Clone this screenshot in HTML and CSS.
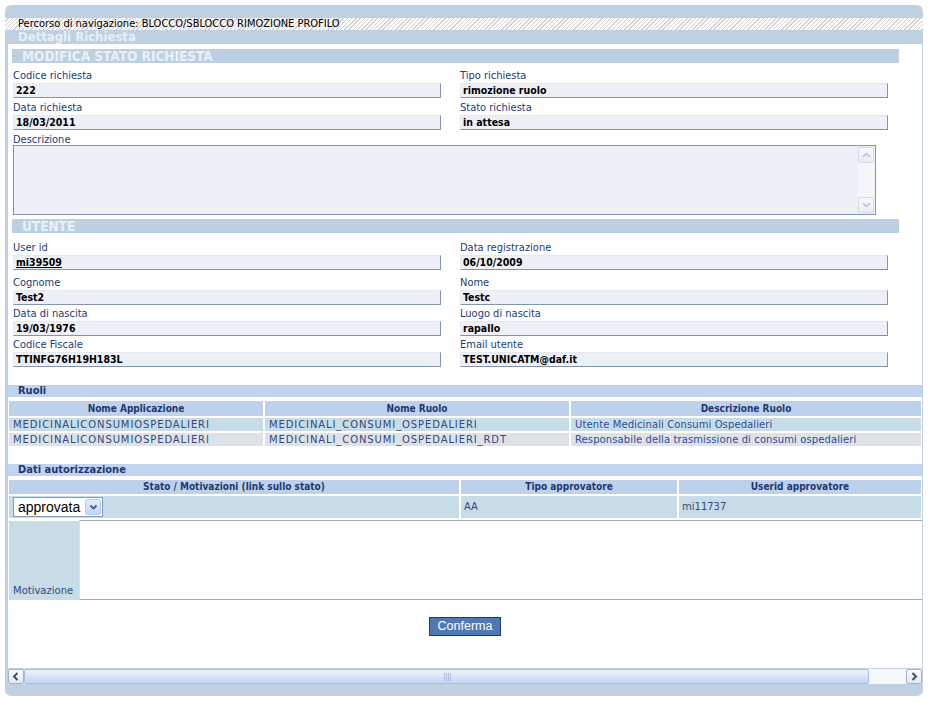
FILE: index.html
```html
<!DOCTYPE html>
<html lang="it">
<head>
<meta charset="utf-8">
<title>Dettagli Richiesta</title>
<link rel="stylesheet" href="styles.css">
</head>
<body>
<div class="panel">
  <div class="nav">Percorso di navigazione: BLOCCO/SBLOCCO RIMOZIONE PROFILO</div>
  <div class="title">Dettagli Richiesta</div>
  <div class="content">
    <div class="form">
      <div class="band">MODIFICA STATO RICHIESTA</div>
      <div class="grid g1">
        <div class="field"><label>Codice richiesta</label><div class="input">222</div></div>
        <div class="field"><label>Tipo richiesta</label><div class="input">rimozione ruolo</div></div>
        <div class="field"><label>Data richiesta</label><div class="input">18/03/2011</div></div>
        <div class="field"><label>Stato richiesta</label><div class="input">in attesa</div></div>
      </div>
      <div class="field desc">
        <label>Descrizione</label>
        <div class="textarea">
          <div class="vscroll">
            <span class="vbtn"><svg width="9" height="6" viewBox="0 0 9 6"><path d="M1 5 L4.5 1.5 L8 5" stroke="#b7c5da" stroke-width="1.6" fill="none"/></svg></span>
            <span class="vtrack"></span>
            <span class="vbtn"><svg width="9" height="6" viewBox="0 0 9 6"><path d="M1 1 L4.5 4.5 L8 1" stroke="#b7c5da" stroke-width="1.6" fill="none"/></svg></span>
          </div>
        </div>
      </div>
      <div class="band u">UTENTE</div>
      <div class="grid g2">
        <div class="field top"><label>User id</label><div class="input"><a class="lnk">mi39509</a></div></div>
        <div class="field top"><label>Data registrazione</label><div class="input">06/10/2009</div></div>
        <div class="field"><label>Cognome</label><div class="input">Test2</div></div>
        <div class="field"><label>Nome</label><div class="input">Testc</div></div>
        <div class="field"><label>Data di nascita</label><div class="input">19/03/1976</div></div>
        <div class="field"><label>Luogo di nascita</label><div class="input">rapallo</div></div>
        <div class="field"><label>Codice Fiscale</label><div class="input">TTINFG76H19H183L</div></div>
        <div class="field"><label>Email utente</label><div class="input">TEST.UNICATM@daf.it</div></div>
      </div>
    </div>

    <div class="bar">Ruoli</div>
    <table class="data ruoli">
      <colgroup><col class="c1"><col class="c2"><col class="c3"></colgroup>
      <tr><th>Nome Applicazione</th><th>Nome Ruolo</th><th>Descrizione Ruolo</th></tr>
      <tr class="r1"><td class="up">MEDICINALICONSUMIOSPEDALIERI</td><td class="up">MEDICINALI_CONSUMI_OSPEDALIERI</td><td class="desc-c">Utente Medicinali Consumi Ospedalieri</td></tr>
      <tr class="r2"><td class="up">MEDICINALICONSUMIOSPEDALIERI</td><td class="up">MEDICINALI_CONSUMI_OSPEDALIERI_RDT</td><td class="desc-c">Responsabile della trasmissione di consumi ospedalieri</td></tr>
    </table>

    <div class="bar b2">Dati autorizzazione</div>
    <table class="data auth">
      <colgroup><col class="a1"><col class="a2"><col class="a3"></colgroup>
      <tr><th>Stato / Motivazioni (link sullo stato)</th><th>Tipo approvatore</th><th>Userid approvatore</th></tr>
      <tr class="r1 sel-row">
        <td>
          <div class="select"><span class="sel-text">approvata</span><span class="sel-btn"><svg width="9" height="7" viewBox="0 0 9 7"><path d="M1.5 1.5 L4.5 4.5 L7.5 1.5" stroke="#4d6185" stroke-width="2" fill="none"/></svg></span></div>
        </td>
        <td>AA</td>
        <td>mi11737</td>
      </tr>
    </table>
    <div class="motiv">
      <div class="mlabel">Motivazione</div>
      <div class="mtext"></div>
    </div>

    <div class="actions"><button class="btn" type="button">Conferma</button></div>

    <div class="hscroll">
      <span class="hbtn"><svg width="8" height="9" viewBox="0 0 8 9"><path d="M5.5 1 L2 4.5 L5.5 8" stroke="#3f4f72" stroke-width="2" fill="none"/></svg></span>
      <span class="thumb"><svg width="8" height="8" viewBox="0 0 8 8"><path d="M1.5 0 V8 M3.5 0 V8 M5.5 0 V8 M7.5 0 V8" stroke="#a9bde0" stroke-width="1"/></svg></span>
      <span class="htrack"></span>
      <span class="hbtn"><svg width="8" height="9" viewBox="0 0 8 9"><path d="M2.5 1 L6 4.5 L2.5 8" stroke="#3f4f72" stroke-width="2" fill="none"/></svg></span>
    </div>
  </div>
</div>
</body>
</html>
```
FILE: styles.css
```css
* { box-sizing: border-box; }
html, body { margin: 0; background: #fff; }
body {
  font-family: "DejaVu Sans Condensed", "DejaVu Sans", sans-serif;
  font-size: 11px;
  color: #000;
}

.panel {
  width: 918px;
  margin: 5px 0 0 5px;
  background: #bed0e2;
  border-radius: 6px;
  padding: 13px 0 12px;
}

.nav {
  height: 12px;
  line-height: 12px;
  padding-left: 13px;
  font-size: 11px;
  color: #000;
  background: repeating-linear-gradient(135deg, #fbfbfb 0 2px, #d3d3d3 2px 3px);
  white-space: nowrap;
}

.title {
  height: 14px;
  line-height: 14px;
  padding-left: 13px;
  font-weight: bold;
  font-size: 13px;
  color: #e9eff7;
}

.content {
  background: #fff;
  margin: 0 1px 0 3px;
}

.form { padding: 5px 0 0 5px; }

.band {
  height: 14px;
  line-height: 14px;
  margin-left: -1px;
  width: 887px;
  background: #bdd0e3;
  color: #eaf0f7;
  font-weight: bold;
  font-size: 13.5px;
  padding-left: 10px;
}
.band.u { margin-top: 4px; }

.grid {
  display: grid;
  grid-template-columns: 428px 428px;
  column-gap: 19px;
  row-gap: 4px;
  margin-top: 7px;
}
.g2 { margin-top: 9px; row-gap: 3px; }
.g2 .top { margin-bottom: 4px; }

.field label {
  display: block;
  height: 12px;
  line-height: 12px;
  color: #213b78;
  font-size: 11px;
  white-space: nowrap;
}

.input {
  height: 15px;
  margin-top: 1px;
  background: #eef0f7;
  border-style: solid;
  border-width: 1px;
  border-color: #e4e8ef #8395ab #8395ab #e8ebf2;
  font-weight: bold;
  font-size: 10.5px;
  line-height: 13px;
  padding-left: 2px;
  white-space: nowrap;
}
.lnk { color: #000; text-decoration: underline; }

.desc { margin-top: 4px; }
.desc label { height: 11px; line-height: 11px; }

.textarea {
  width: 863px;
  height: 70px;
  border: 1px solid #7f93aa;
  background: #eef0f7;
  display: flex;
  justify-content: flex-end;
  padding: 1px;
}
.vscroll {
  width: 16px;
  display: flex;
  flex-direction: column;
  background: #f5f6f9;
}
.vbtn {
  height: 16px;
  display: flex;
  align-items: center;
  justify-content: center;
  background: linear-gradient(#f6f8fc, #e7edf7);
  border: 1px solid #d3dced;
  border-radius: 2px;
}
.vtrack { flex: 1; }

.bar {
  height: 12px;
  line-height: 12px;
  background: #c1d3ee;
  color: #1f3770;
  font-weight: bold;
  font-size: 11px;
  padding-left: 10px;
  margin-top: 18px;
}
.bar.b2 { margin-top: 16px; }

table.data {
  border-collapse: separate;
  border-spacing: 2px;
  width: 916px;
  margin: 2px 0 0 -1px;
  table-layout: fixed;
}
col.c1 { width: 254px; }
col.c2 { width: 304px; }
col.c3 { width: 350px; }
col.a1 { width: 450px; }
col.a2 { width: 216px; }
col.a3 { width: 242px; }

th {
  height: 15px;
  line-height: 15px;
  padding: 0;
  background: #bed1ea;
  color: #1f3770;
  font-weight: bold;
  font-size: 10px;
  text-align: center;
  white-space: nowrap;
}
.auth th { height: 14px; line-height: 14px; }

td {
  height: 13px;
  line-height: 13px;
  padding: 0 0 0 4px;
  font-family: "DejaVu Sans", sans-serif;
  font-size: 10px;
  color: #34477f;
  white-space: nowrap;
  overflow: hidden;
}
td.up { letter-spacing: 0.9px; }
td.desc-c { color: #2f4c9c; letter-spacing: 0.1px; }
tr.r1 td { background: #c7dce6; }
tr.r2 td { background: #dde2e6; }

.sel-row td { height: 22px; line-height: 22px; vertical-align: middle; padding-left: 3px; }
.sel-row td:first-child { padding-left: 4px; }

.select {
  width: 90px;
  height: 20px;
  background: #fff;
  border: 1px solid #7f9db9;
  display: flex;
  align-items: center;
  justify-content: space-between;
  padding: 1px 1px 1px 4px;
}
.sel-text {
  font-family: "Liberation Sans", Arial, sans-serif;
  font-size: 14px;
  line-height: 16px;
  color: #000;
}
.sel-btn {
  width: 16px;
  height: 16px;
  display: flex;
  align-items: center;
  justify-content: center;
  background: linear-gradient(#e3ecfd, #c3d5fd);
  border: 1px solid #b7cbf3;
  border-radius: 2px;
}

.motiv {
  display: flex;
  height: 80px;
  margin-left: 1px;
}
.mlabel {
  width: 70px;
  margin-top: 1px;
  background: #c7dce6;
  display: flex;
  align-items: flex-end;
  padding: 0 0 3px 4px;
  font-family: "DejaVu Sans", sans-serif;
  font-size: 10px;
  line-height: 12px;
  color: #34477f;
}
.mtext {
  flex: 1;
  background: #fff;
  border-top: 1px solid #a8afb6;
  border-bottom: 1px solid #a8afb6;
  border-left: 1px solid #dde1e5;
}

.actions {
  display: flex;
  justify-content: center;
  margin-top: 17px;
}
.btn {
  width: 72px;
  height: 19px;
  background: #4f78b4;
  border: 1px solid #1d3b6b;
  color: #fff;
  font-family: "Liberation Sans", Arial, sans-serif;
  font-size: 12.5px;
  line-height: 17px;
  padding: 0;
}

.hscroll {
  margin-top: 32px;
  height: 16px;
  display: flex;
  background: #f6f7fa;
  border-top: 1px solid #c9d3de;
}
.hbtn {
  width: 16px;
  display: flex;
  align-items: center;
  justify-content: center;
  background: linear-gradient(#fbfcfe, #e1e8f2);
  border: 1px solid #a3b2c6;
  border-radius: 2px;
}
.thumb {
  width: 845px;
  display: flex;
  align-items: center;
  justify-content: center;
  background: linear-gradient(#eef3fc, #d6e3f8 55%, #c3d4f1);
  border: 1px solid #a8bcdd;
  border-radius: 2px;
}
.htrack { flex: 1; }
```
